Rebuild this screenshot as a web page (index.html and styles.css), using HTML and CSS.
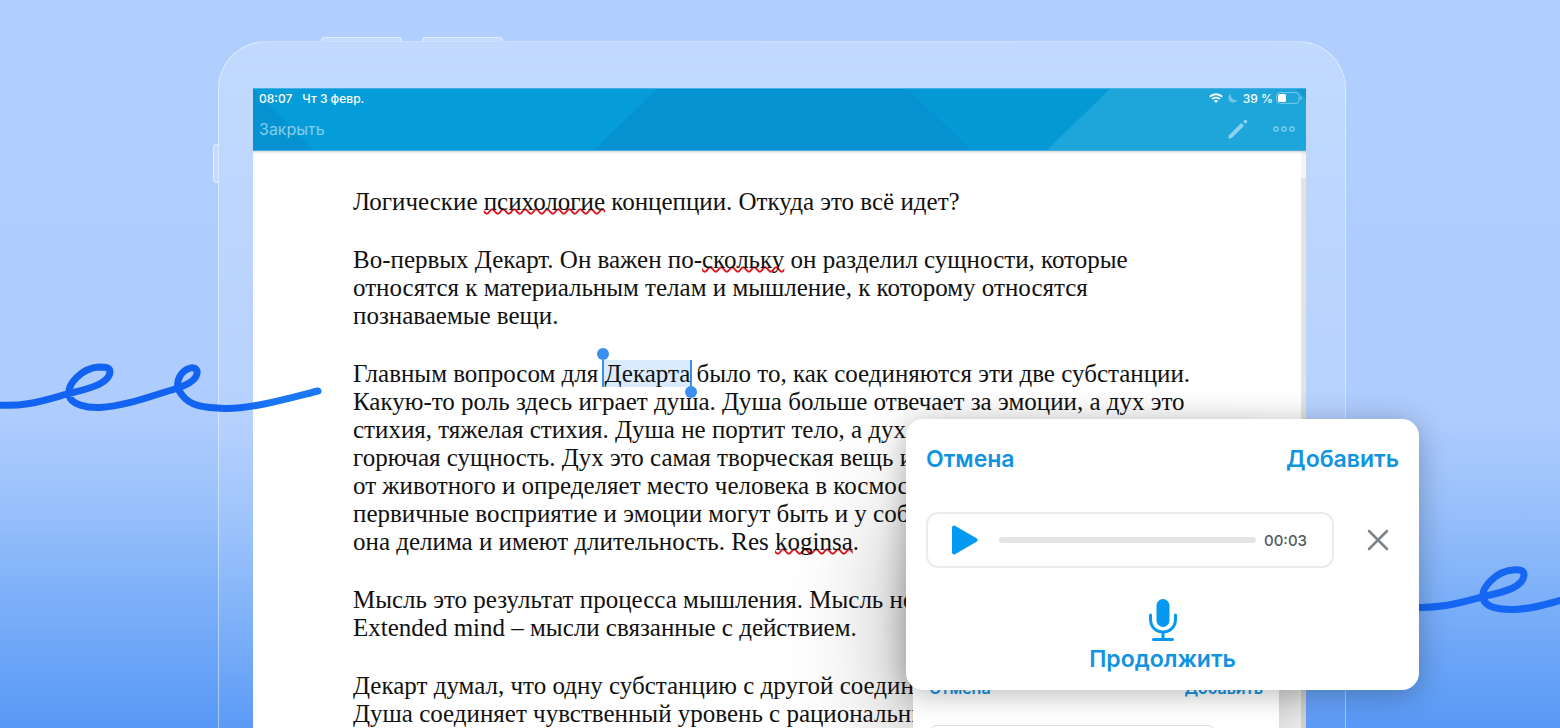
FILE: index.html
```html
<!DOCTYPE html>
<html lang="ru">
<head>
<meta charset="utf-8">
<title>Голосовая заметка</title>
<link rel="stylesheet" href="styles.css">
</head>
<body>
<div class="stage">
  <div class="tablet">
    <span class="side-key key-top-a"></span>
    <span class="side-key key-top-b"></span>
    <span class="side-key key-left"></span>
    <div class="screen">
      <header class="topbar">
        <svg class="topbar-art" viewBox="0 0 1053 63" preserveAspectRatio="none" aria-hidden="true">
          <rect width="1053" height="63" fill="#059dd9"/>
          <path d="M0 0L61 63H0Z" fill="#0692d1"/>
          <path d="M404 0H1053V63H341Z" fill="#0692d1"/>
          <path d="M655 0H1053V63H718Z" fill="#0499d5"/>
          <path d="M857 0H1053V63H794Z" fill="#1ea6da"/>
          <path d="M1043 0H1053V10Z" fill="#1199d0"/>
        </svg>
        <div class="status">
          <div class="status-group wide"><span>08:07</span><span>Чт 3 февр.</span></div>
          <div class="status-group">
            <svg width="14" height="10" viewBox="0 0 14 10" fill="none" stroke="#fff" stroke-width="2" aria-hidden="true">
              <path d="M.8 3.7C4.3 .3 9.7 .3 13.2 3.7M3.2 6.1C5.4 4.2 8.6 4.2 10.8 6.1"/>
              <path d="M4.9 7.7C6.1 6.8 7.9 6.8 9.1 7.7L7 9.9Z" fill="#fff" stroke="none"/>
            </svg>
            <svg width="10" height="10" viewBox="0 0 10 10" aria-hidden="true"><path d="M3.2 .5A4.8 4.8 0 1 0 9.6 6.8A4.9 4.9 0 0 1 3.2 .5Z" fill="#6fc4e7"/></svg>
            <span>39 %</span>
            <svg class="battery" width="26" height="12" viewBox="0 0 26 12" aria-hidden="true">
              <rect x=".6" y=".6" width="22.4" height="10.8" rx="3" fill="none" stroke="#7cc9ea"/>
              <rect x="2" y="2" width="8" height="8" rx="1.5" fill="#fff"/>
              <path d="M24.3 4.2Q25.8 4.6 25.8 6T24.3 7.8Z" fill="#8fd0ec"/>
            </svg>
          </div>
        </div>
        <div class="actions">
          <button class="bar-btn">Закрыть</button>
          <div class="action-icons">
            <button class="bar-btn" aria-label="Редактировать">
              <svg width="20" height="20" viewBox="0 0 20 20" fill="#8fd2ed"><path d="M.3 19.7L1 16.2L13.2 4L16 6.8L3.8 19Z"/><path d="M15 2.600L16.400 1.200Q17.600 .2 18.800 1.200Q19.900 2.400 18.800 3.600L17.400 5Z"/></svg>
            </button>
            <button class="bar-btn" aria-label="Ещё">
              <svg width="22" height="6" viewBox="0 0 22 6" fill="none" stroke="#8fd2ed" stroke-width="1.2"><circle cx="3" cy="3" r="2.2"/><circle cx="11" cy="3" r="2.2"/><circle cx="19" cy="3" r="2.2"/></svg>
            </button>
          </div>
        </div>
      </header>
      <main class="paper">
        <p>Логические <span class="typo">психологие</span> концепции. Откуда это всё идет?</p>
        <p>Во-первых Декарт. Он важен по-<span class="typo">скольку</span> он разделил сущности, которые<br>относятся к материальным телам и мышление, к которому относятся<br>познаваемые вещи.</p>
        <p>Главным вопросом для <span class="picked">Декарта</span> было то, как соединяются эти две субстанции.<br>Какую-то роль здесь играет душа. Душа больше отвечает за эмоции, а дух это<br>стихия, тяжелая стихия. Душа не портит тело, а дух<br>горючая сущность. Дух это самая творческая вещь и<br>от животного и определяет место человека в космосе<br>первичные восприятие и эмоции могут быть и у собак<br>она делима и имеют длительность. Res <span class="typo">koginsa</span>.</p>
        <p>Мысль это результат процесса мышления. Мысль не<br>Extended mind – мысли связанные с действием.</p>
        <p>Декарт думал, что одну субстанцию с другой соедини<br>Душа соединяет чувственный уровень с рациональны</p>
        <div class="sheet">
          <div class="sheet-row"><span>Отмена</span><span>Добавить</span></div>
          <div class="sheet-box"></div>
        </div>
        <div class="scroll"></div>
      </main>
    </div>
  </div>

  <svg class="swirl swirl-left" width="330" height="90" viewBox="0 0 330 90" aria-hidden="true">
    <defs><linearGradient id="ink" gradientUnits="userSpaceOnUse" x1="0" y1="0" x2="320" y2="0"><stop offset=".75" stop-color="#1263f2"/><stop offset=".85" stop-color="#1b78f4"/></linearGradient></defs>
    <path stroke="url(#ink)" d="M-5 65C25 67 42 61 67 54C88 49 109 44 110 32C110 27 105 27 99 27C82 28 67 44 69 55C71 65 87 68 100 67.500C126 66 151 56 175 49C191 44 198 38 197 31C195 25 185 28 180 36C176 43 177 49 182 55C190 66 204 68 225 68.500C252 69 290 58 318 51"/>
  </svg>
  <svg class="swirl swirl-right" width="150" height="60" viewBox="0 0 150 60" aria-hidden="true">
    <path stroke="#1466f3" d="M0 47C30 49 49 43 72 37C93 32 113 28 114 15C114 10 109 9 103 10C87 11 71 27 73 38C75 48 91 50 104 49.500C122 49 137 44 155 39"/>
  </svg>

  <section class="recorder" aria-label="Диктофон">
    <div class="rec-head"><button class="link">Отмена</button><button class="link">Добавить</button></div>
    <div class="rec-line">
      <div class="player">
        <button aria-label="Воспроизвести"><svg width="27" height="30" viewBox="0 0 27 30"><path d="M3 2.500L24.500 15L3 27.500Z" fill="#0599f2" stroke="#0599f2" stroke-width="4" stroke-linejoin="round"/></svg></button>
        <input class="track" type="range" min="0" max="3" value="0" aria-label="Позиция">
        <span class="time">00:03</span>
      </div>
      <button aria-label="Удалить"><svg width="22" height="22" viewBox="0 0 22 22" fill="none" stroke="#7b8488" stroke-width="2.500" stroke-linecap="round"><path d="M2 2L20 20M20 2L2 20"/></svg></button>
    </div>
    <button class="link resume">
      <svg width="30" height="42" viewBox="0 0 30 42" fill="none" stroke="#0599f2" stroke-width="3" stroke-linecap="round" aria-hidden="true"><rect x="8.500" y="0" width="13" height="28" rx="6.500" fill="#0599f2" stroke="none"/><path d="M2.500 16V20C2.500 28 8 33 15 33S27.500 28 27.500 20V16M15 33V40M5.500 40.500H24.500"/></svg>
      <span>Продолжить</span>
    </button>
  </section>
</div>
</body>
</html>
```
FILE: styles.css
```css
* { box-sizing: border-box; }
body { margin: 0; font-family: Inter, "Liberation Sans", sans-serif; }
button { border: 0; padding: 0; background: none; font: inherit; color: inherit; cursor: pointer; }
svg { display: block; }
p { margin: 0; }

.stage {
  position: relative;
  display: flex;
  height: 100vh;
  overflow: hidden;
  padding: 41px 214px 0 218px;
  background: linear-gradient(180deg, #b0cffe 0%, #aeccfe 58%, #98c0fb 70%, #7db0f9 82%, #68a3f7 92%, #5898f6 100%);
}

.tablet {
  position: relative;
  flex: 1;
  display: flex;
  min-width: 0;
  padding: 46px 39px 0 34px;
  border: 1px solid rgba(255, 255, 255, .45);
  border-bottom: 0;
  border-radius: 48px 48px 0 0;
  background: linear-gradient(180deg, rgba(213, 228, 255, .5), rgba(200, 222, 255, .35) 50%, rgba(120, 175, 255, .1));
}
.side-key { position: absolute; background: #c6dcff; border: 1px solid rgba(255, 255, 255, .5); }
.key-top-a, .key-top-b { top: -5px; width: 81px; height: 4px; border-radius: 4px 4px 0 0; border-bottom: 0; }
.key-top-a { left: 102px; }
.key-top-b { left: 203px; }
.key-left { left: -6px; top: 102px; width: 5px; height: 39px; border-radius: 4px 0 0 4px; border-right: 0; }

.screen { flex: 1; display: flex; flex-direction: column; min-width: 0; }
.topbar {
  position: relative;
  height: 63px;
  padding: 3px 4px 0 6px;
  flex: none;
  color: #fff;
  border-top: 1px solid #45b1e2;
  border-bottom: 1px solid #45b1e2;
}
.topbar-art { position: absolute; inset: 0; width: 100%; height: 100%; }
.status, .actions { position: relative; display: flex; justify-content: space-between; align-items: center; }
.status { height: 12px; font-size: 12px; font-weight: 500; }
.status-group { display: flex; align-items: center; gap: 5px; }
.status-group.wide { gap: 10px; }
.battery { margin-left: -2px; }
.actions { height: 50px; padding-right: 7px; color: #83cdeb; font-size: 16px; }
.action-icons { display: flex; align-items: center; gap: 25px; }

.paper {
  position: relative;
  flex: 1;
  display: flex;
  flex-direction: column;
  gap: 30px;
  padding: 37px 20px 0 100px;
  overflow: hidden;
  background: #fff;
  box-shadow: inset 0 3px 3px -2px rgba(0, 0, 0, .2);
  color: #111;
  font-family: "Liberation Serif", "Times New Roman", serif;
  font-size: 25px;
  line-height: 28px;
  white-space: nowrap;
}
.typo { text-decoration: underline wavy #e0161e 2px; text-decoration-skip-ink: none; text-underline-offset: -2px; }
.picked { position: relative; background: #d9ebfd; box-shadow: -2px 0 #3b8ff3, 2px 0 #3b8ff3; }
.picked::before, .picked::after { content: ""; position: absolute; width: 12px; height: 12px; border-radius: 50%; background: #3b8ff3; }
.picked::before { left: -7px; top: -12px; }
.picked::after { right: -7px; bottom: -11px; }

.scroll { position: absolute; right: 0; top: 0; bottom: 0; width: 5px; background: linear-gradient(rgba(0, 0, 0, .04) 27px, rgba(0, 0, 0, .11) 27px); }
.sheet {
  position: absolute;
  right: 27px;
  bottom: 0;
  width: 366px;
  height: 240px;
  padding: 186px 16px 0;
  background: #fff;
  box-shadow: 0 20px 120px rgba(0, 0, 0, .4);
  font-family: Inter, sans-serif;
  font-size: 16px;
  font-weight: 600;
  color: #1093e3;
}
.sheet-row { display: flex; justify-content: space-between; height: 51px; }
.sheet-box { width: 287px; height: 40px; border: 1px solid #dcdcdc; border-radius: 8px; }

.swirl { position: absolute; fill: none; stroke-width: 7px; stroke-linecap: round; }
.swirl-left { left: 0; top: 340px; }
.swirl-right { right: 0; top: 560px; }

.recorder {
  position: absolute;
  right: 141px;
  top: 419px;
  width: 513px;
  padding: 25px 20px 16px;
  display: flex;
  flex-direction: column;
  background: #fff;
  border-radius: 17px;
  box-shadow: 0 4px 30px rgba(0, 0, 0, .28);
}
.link { color: #1093e3; font-size: 23px; font-weight: 600; line-height: 30px; }
.rec-head { display: flex; justify-content: space-between; }
.rec-line { display: flex; align-items: center; justify-content: space-between; margin: 38px 10px 31px 0; }
.player {
  display: flex;
  align-items: center;
  width: 408px;
  height: 56px;
  padding: 0 25px 0 23px;
  border: 2px solid #ebebeb;
  border-radius: 12px;
}
.track { appearance: none; flex: 1; min-width: 0; height: 6px; margin: 0 8px 0 21px; border-radius: 3px; background: #e2e4e5; }
.track::-webkit-slider-thumb { appearance: none; width: 1px; height: 6px; background: transparent; }
.time { color: #515a60; font-size: 15px; font-weight: 500; }
.resume { align-self: center; display: flex; flex-direction: column; align-items: center; gap: 3px; }
```
